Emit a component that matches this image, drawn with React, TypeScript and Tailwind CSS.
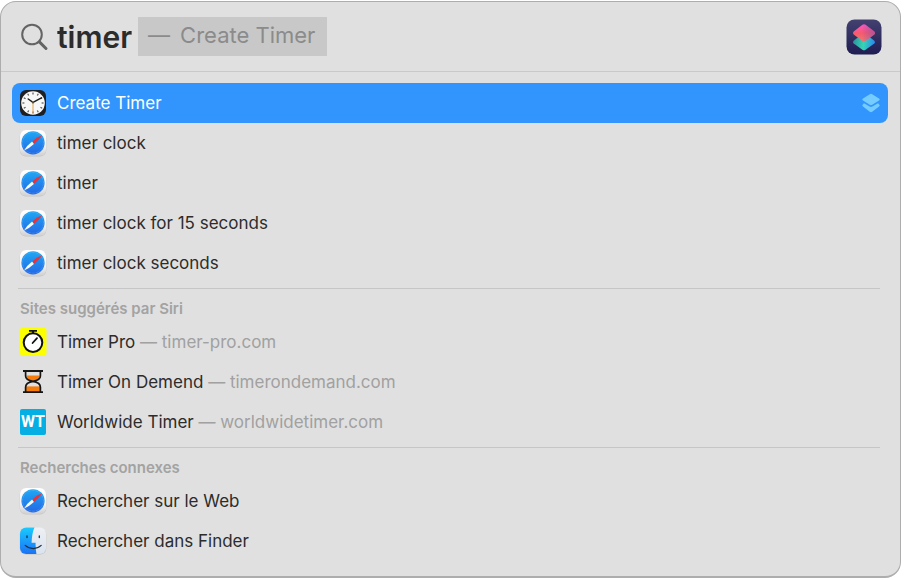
import { useState } from "react";
import type { ReactNode } from "react";

const ClockIcon = () => (
  <svg viewBox="0 0 28 28" className="size-7 shrink-0" aria-hidden="true">
    <rect x="1" y="1" width="26" height="26" rx="6" fill="#1f1f21" />
    <circle cx="14" cy="14" r="11.8" fill="#f7f7f7" />
    {Array.from({ length: 12 }, (_, i) => (
      <path key={i} d="M14 3.4v2" stroke="#555" strokeWidth="1.2" transform={`rotate(${i * 30} 14 14)`} />
    ))}
    <path d="M14 13.4 9.2 10M14 13.4l8.4-4.6" stroke="#1b1b1b" strokeWidth="1.4" strokeLinecap="round" />
    <path d="M14 12v12" stroke="#e3a04a" strokeWidth="1" />
    <circle cx="14" cy="13.4" r="1.1" fill="#5c4a30" />
  </svg>
);

const SafariIcon = () => (
  <svg viewBox="0 0 28 28" className="size-7 shrink-0" aria-hidden="true">
    <defs>
      <linearGradient id="safari-tile" x1="0" y1="0" x2="0" y2="1">
        <stop offset="0" stopColor="#ffffff" />
        <stop offset="0.6" stopColor="#f3f3f3" />
        <stop offset="1" stopColor="#cfcfcf" />
      </linearGradient>
      <linearGradient id="safari-dial" x1="0" y1="0" x2="0" y2="1">
        <stop offset="0" stopColor="#1fa8f4" />
        <stop offset="1" stopColor="#2467e6" />
      </linearGradient>
    </defs>
    <rect x="0.8" y="1.6" width="26.4" height="26" rx="6" fill="#000" opacity="0.12" />
    <rect x="1" y="1" width="26" height="26" rx="6" fill="url(#safari-tile)" />
    <circle cx="14" cy="13.8" r="11.6" fill="url(#safari-dial)" />
    <circle cx="14" cy="13.8" r="10.4" fill="none" stroke="#8fd0ff" strokeWidth="0.8" strokeDasharray="0.6 0.8" opacity="0.6" />
    <path d="m23 6.200-3.200 4.400-4.900 4.400-1.800-2.400 5-4z" fill="#e9323a" />
    <path d="m5 21.400 3.200-4.400 4.900-4.400 1.800 2.400-5 4z" fill="#f7f9fc" />
  </svg>
);

const FinderIcon = () => (
  <svg viewBox="0 0 28 28" className="size-7 shrink-0" aria-hidden="true">
    <defs>
      <linearGradient id="finder-left" x1="0" y1="0" x2="0" y2="1">
        <stop offset="0" stopColor="#19ccff" />
        <stop offset="1" stopColor="#1c6ef5" />
      </linearGradient>
      <linearGradient id="finder-right" x1="0" y1="0" x2="0" y2="1">
        <stop offset="0" stopColor="#eef0f4" />
        <stop offset="1" stopColor="#d9e2ef" />
      </linearGradient>
      <clipPath id="finder-clip">
        <rect x="1" y="0.5" width="26" height="26.4" rx="6" />
      </clipPath>
    </defs>
    <rect x="0.8" y="1.2" width="26.4" height="26.2" rx="6" fill="#000" opacity="0.14" />
    <g clipPath="url(#finder-clip)">
      <path d="M0 0h28v28H0z" fill="url(#finder-right)" />
      <path d="M0 0h15.600c-1.700 4-2.800 9-3 15.700h4c-.1 4.500.2 8 1 12.300H0z" fill="url(#finder-left)" />
    </g>
    <path d="M8 9v1.600M20.300 9v1.600" stroke="#143042" strokeWidth="1.300" strokeLinecap="round" />
    <path d="M6.200 18.400c4.600 4.200 11.400 4.200 16 0" fill="none" stroke="#1b3042" strokeWidth="1.200" strokeLinecap="round" />
  </svg>
);

const StopwatchIcon = () => (
  <svg viewBox="0 0 28 28" className="size-7 shrink-0" aria-hidden="true">
    <rect x="1" y="0" width="26.500" height="27" rx="1.500" fill="#fbff00" />
    <circle cx="14" cy="14.600" r="9.300" fill="#fff" stroke="#111" strokeWidth="2" />
    <path d="M10 2.800h8M14 2.800v3" stroke="#111" strokeWidth="1.800" />
    <path d="M13.600 15 18 10.200" stroke="#111" strokeWidth="1.800" strokeLinecap="round" />
  </svg>
);

const HourglassIcon = () => (
  <svg viewBox="0 0 28 28" className="size-7 shrink-0" aria-hidden="true">
    <path d="M7.400 7.600h13.200c-.2 3-2.600 4.600-6.600 5.600-4-1-6.400-2.600-6.600-5.600z" fill="#f57c0a" />
    <path d="M6.800 18.400h14.400V24H6.800z" fill="#f57c0a" />
    <path
      d="M6.600 3v5c0 3 2.800 4.600 7.400 5.400 4.600-.8 7.400-2.400 7.400-5.400V3M6.600 24v-4.800c0-3 2.800-5 7.400-5.800 4.600.8 7.400 2.800 7.400 5.800V24"
      fill="none"
      stroke="#151515"
      strokeWidth="1.700"
    />
    <path d="M4 3h20M4 24.200h20" stroke="#151515" strokeWidth="1.800" />
  </svg>
);

const WorldwideIcon = () => (
  <span className="flex size-7 shrink-0 items-center justify-center" aria-hidden="true">
    <span className="flex size-[26px] items-center justify-center rounded-xs bg-[#05aee3] font-[Roboto,sans-serif] text-base font-bold text-white">
      WT
    </span>
  </span>
);

const ShortcutsGlyph = () => (
  <svg viewBox="0 0 18 20" className="h-5 w-[18px] shrink-0" fill="#74ccff" aria-hidden="true">
    <path d="M7.800 1.200Q9 .4 10.200 1.200l6.800 4.300q1.400 1 0 2l-6.800 4.300q-1.200.8-2.400 0L1 7.500q-1.400-1 0-2z" />
    <path d="M2 10.200 7.600 13.600q1.400.8 2.800 0l5.600-3.400 1 1q1.300 1.300 0 2.400l-6.800 5.200q-1.200.9-2.400 0L1 13.600q-1.300-1.100 0-2.400z" />
  </svg>
);

const ShortcutsApp = () => (
  <svg viewBox="0 0 36 36" className="size-9 shrink-0" aria-hidden="true">
    <defs>
      <linearGradient id="app-tile" x1="0" y1="0" x2="0" y2="1">
        <stop offset="0" stopColor="#424270" />
        <stop offset="1" stopColor="#1f1d52" />
      </linearGradient>
      <linearGradient id="app-top" x1="0.4" y1="0" x2="0.5" y2="1">
        <stop offset="0" stopColor="#fb56c8" />
        <stop offset="0.5" stopColor="#f75a6c" />
        <stop offset="1" stopColor="#f07a72" />
      </linearGradient>
      <linearGradient id="app-shade" x1="0.4" y1="0.5" x2="1" y2="0.5">
        <stop offset="0" stopColor="#8a4aa8" stopOpacity="0" />
        <stop offset="1" stopColor="#a050a8" stopOpacity="0.75" />
      </linearGradient>
      <linearGradient id="app-bottom" x1="0" y1="0.3" x2="1" y2="0.4">
        <stop offset="0" stopColor="#2b8f9c" />
        <stop offset="0.5" stopColor="#35d6b4" />
        <stop offset="1" stopColor="#2b86f2" />
      </linearGradient>
    </defs>
    <rect x="0.500" y="0.500" width="35" height="35" rx="8" fill="url(#app-tile)" />
    <path d="M16.400 14.800q1.600-1.200 3.200 0l8.700 6.900q1.600 1.400 0 2.800l-8.700 6.300q-1.600 1.100-3.200 0l-8.700-6.300q-1.600-1.400 0-2.800z" fill="url(#app-bottom)" />
    <path d="M16.400 5.800q1.600-1.300 3.200 0l8.700 6.800q1.600 1.400 0 2.800l-8.700 6.600q-1.600 1.200-3.200 0l-8.700-6.600q-1.600-1.400 0-2.800z" fill="url(#app-top)" />
    <path d="M16.400 5.800q1.600-1.300 3.200 0l8.700 6.800q1.600 1.400 0 2.800l-8.700 6.600q-1.600 1.200-3.200 0l-8.700-6.600q-1.600-1.400 0-2.800z" fill="url(#app-shade)" />
  </svg>
);

interface Result {
  icon: ReactNode;
  title: string;
  site?: string;
  shortcut?: boolean;
}

interface Section {
  heading?: string;
  results: Result[];
}

const sections: Section[] = [
  {
    results: [
      { icon: <ClockIcon />, title: "Create Timer", shortcut: true },
      { icon: <SafariIcon />, title: "timer clock" },
      { icon: <SafariIcon />, title: "timer" },
      { icon: <SafariIcon />, title: "timer clock for 15 seconds" },
      { icon: <SafariIcon />, title: "timer clock seconds" },
    ],
  },
  {
    heading: "Sites suggérés par Siri",
    results: [
      { icon: <StopwatchIcon />, title: "Timer Pro", site: "timer-pro.com" },
      { icon: <HourglassIcon />, title: "Timer On Demend", site: "timerondemand.com" },
      { icon: <WorldwideIcon />, title: "Worldwide Timer", site: "worldwidetimer.com" },
    ],
  },
  {
    heading: "Recherches connexes",
    results: [
      { icon: <SafariIcon />, title: "Rechercher sur le Web" },
      { icon: <FinderIcon />, title: "Rechercher dans Finder" },
    ],
  },
];

const ResultRow = ({ result, selected, onSelect }: { result: Result; selected: boolean; onSelect: () => void }) => (
  <button
    type="button"
    onClick={onSelect}
    className={`flex h-10 w-full items-center gap-2.5 rounded-lg pr-2 pl-[7px] text-left text-[17px] ${
      selected ? "bg-[#3295fd] text-white" : "text-[#2c2c2c]"
    }`}
  >
    {result.icon}
    <span className="flex-1 pt-0.5">
      {result.title}
      {result.site && <span className="text-[#a1a1a1]"> — {result.site}</span>}
    </span>
    {result.shortcut && <ShortcutsGlyph />}
  </button>
);

const App = () => {
  const [query, setQuery] = useState("timer");
  const [selected, setSelected] = useState("Create Timer");

  return (
    <main className="bg-white pt-px pr-[3px] font-[Inter,sans-serif]">
      <div className="rounded-2xl border border-b-2 border-[#adadad] bg-[#e0e0e0] pb-[15px]">
        {/* Search field */}
        <header className="flex h-[70px] items-center border-b border-[#c9c9c9] pr-[18px] pl-5">
          <svg viewBox="0 0 28 28" className="mr-2 size-7 shrink-0" fill="none" stroke="#646464" aria-hidden="true">
            <circle cx="11" cy="11.500" r="9.800" strokeWidth="2" />
            <path d="m18.400 18.900 6.600 6.600" strokeWidth="3" strokeLinecap="round" />
          </svg>
          <input
            aria-label="Recherche"
            value={query}
            onChange={(e) => setQuery(e.target.value)}
            className="field-sizing-content pt-0.5 text-[30px] font-semibold text-[#2c2c2c] outline-none"
          />
          <span className="ml-1.5 flex h-[39px] items-center gap-2.5 bg-[#c8c8c8] pr-3 pb-0.5 pl-2.5 text-[22px] text-[#8b8b8b]">
            <span>—</span>
            <span>Create Timer</span>
          </span>
          <span className="ml-auto">
            <ShortcutsApp />
          </span>
        </header>

        {/* Results */}
        <div className="pt-[11px] pr-3 pl-[11px]">
          {sections.map((section, i) => (
            <section key={i}>
              {section.heading && (
                <h2 className="mr-2 ml-1.5 mt-[5px] flex h-[34px] items-center border-t border-[#c6c6c6] pt-2 pl-0.5 text-[15px] font-semibold text-[#a3a3a3]">
                  {section.heading}
                </h2>
              )}
              {section.results.map((result) => (
                <ResultRow
                  key={result.title}
                  result={result}
                  selected={selected === result.title}
                  onSelect={() => setSelected(result.title)}
                />
              ))}
            </section>
          ))}
        </div>
      </div>
    </main>
  );
};

export default App;
